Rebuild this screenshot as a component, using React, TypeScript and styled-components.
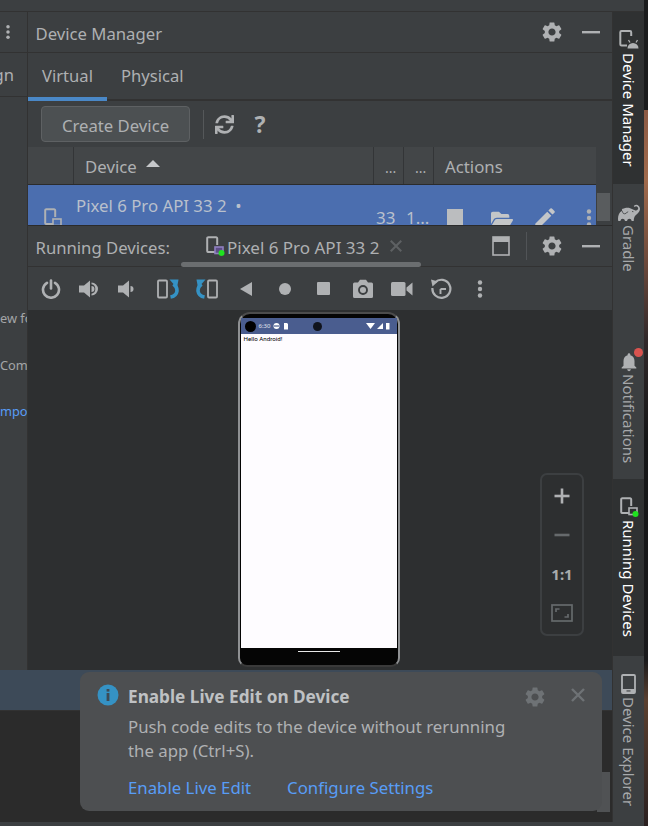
import React from 'react';
import styled, { createGlobalStyle } from 'styled-components';
import { FaFolderOpen, FaSync } from 'react-icons/fa';
import { MdEdit, MdNotifications, MdSettings } from 'react-icons/md';
import { SiGradle } from 'react-icons/si';

const ICON = '#afb1b3';
const TEXT = '#aeb0b2';
const LINE = '#323232';
const BG = '#3c3f41';
const DARK = '#2d2f30';
const LINK = '#589df6';
const COLUMNS = '45px 300px 30px 30px 163px';

const GlobalStyle = createGlobalStyle`
  html, body { margin: 0; padding: 0; background: ${BG}; }
  * { box-sizing: border-box; }
`;

const Page = styled.div`
  width: 648px;
  height: 826px;
  display: flex;
  overflow: hidden;
  position: relative;
  font-family: 'Noto Sans', 'Open Sans', sans-serif;
  color: ${TEXT};
  background: ${BG};
`;

const Window = styled.div`
  width: 644px;
  display: flex;
  flex-direction: column;
`;

const Wallpaper = styled.div`
  width: 4px;
  background: linear-gradient(
    180deg,
    #1b1c1d 0 110px,
    #8c5a44 110px,
    #a06a4c 180px,
    #6d4a3c 260px,
    #30282a 340px,
    #151617 440px,
    #1a1a1c 660px,
    #5a4030 700px,
    #2a2020 826px
  );
`;

const TopStrip = styled.div`
  height: 12px;
  border-bottom: 1px solid ${LINE};
`;

const BottomStrip = styled.div`
  height: 4px;
  background: ${BG};
`;

const Workspace = styled.div`
  flex: 1;
  display: flex;
  min-height: 0;
`;

const Center = styled.div`
  width: 612px;
  display: flex;
  flex-direction: column;
`;

const Upper = styled.div`
  height: 658px;
  display: flex;
`;

const LeftStrip = styled.div`
  width: 28px;
  display: flex;
  flex-direction: column;
  border-right: 1px solid ${LINE};
  overflow: hidden;
`;

const LeftHead = styled.div`
  height: 41px;
  display: flex;
  align-items: center;
  justify-content: flex-end;
  padding-right: 11px;
  border-bottom: 1px solid ${LINE};
`;

const LeftTab = styled.div`
  height: 44px;
  display: flex;
  align-items: center;
  justify-content: flex-end;
  padding-right: 13px;
  font-size: 16.6px;
  white-space: nowrap;
  border-bottom: 1px solid ${LINE};
`;

const LeftLines = styled.div`
  display: flex;
  flex-direction: column;
  gap: 26.5px;
  padding-top: 211px;
`;

const LeftLine = styled.div<{ $link?: boolean }>`
  height: 20px;
  line-height: 20px;
  font-size: 12.8px;
  white-space: nowrap;
  color: ${props => (props.$link ? LINK : '#a4a6a8')};
`;

const Main = styled.div`
  width: 584px;
  display: flex;
  flex-direction: column;
  position: relative;
`;

const PaneHeader = styled.div`
  height: 41px;
  flex: none;
  display: flex;
  align-items: center;
  padding: 2px 2px 0 7.5px;
  border-bottom: 1px solid ${LINE};
  font-size: 16.7px;
`;

const PaneActions = styled.div`
  margin: -2px 0 0 auto;
  display: flex;
  align-items: center;
`;

const ActionSlot = styled.div`
  width: 39px;
  display: flex;
  justify-content: center;
  align-items: center;
`;

const VSep = styled.div`
  width: 1px;
  height: 28px;
  background: #515457;
  margin: 0 5px 0 6px;
`;

const Tabs = styled.div`
  height: 48px;
  flex: none;
  display: flex;
  border-bottom: 2px solid ${LINE};
`;

const Tab = styled.div<{ $active?: boolean }>`
  height: 48px;
  padding: 1px 14px 0;
  display: flex;
  align-items: center;
  font-size: 16.6px;
  border-bottom: 4px solid ${props => (props.$active ? '#4a88c7' : 'transparent')};
  color: ${TEXT};
`;

const Toolbar = styled.div`
  height: 46px;
  flex: none;
  display: flex;
  align-items: center;
  padding-left: 13px;
`;

const CreateButton = styled.button`
  width: 149px;
  height: 36px;
  border: 1px solid #5e6163;
  border-radius: 4px;
  background: #4c5052;
  color: ${TEXT};
  font: inherit;
  font-size: 16.7px;
  padding: 3px 0 0;
`;

const ToolSep = styled.div`
  width: 1px;
  height: 29px;
  background: #55585a;
  margin: 0 2px 0 13px;
`;

const ToolIcon = styled.div`
  width: 36px;
  display: flex;
  justify-content: center;
  align-items: center;
  font-size: 23px;
  font-weight: 700;
  color: ${ICON};
`;

const TableHeader = styled.div`
  width: 568px;
  height: 38px;
  flex: none;
  display: grid;
  grid-template-columns: ${COLUMNS};
  background: #434648;
  border-bottom: 1px solid #2b2b2b;
  font-size: 16.8px;
`;

const HeadCell = styled.div<{ $first?: boolean }>`
  display: flex;
  align-items: center;
  padding: 2px 0 0 11px;
  gap: 9px;
  border-left: ${props => (props.$first ? 'none' : '1px solid #333537')};
`;

const Dots = styled(HeadCell)`
  align-items: flex-end;
  padding-bottom: 7px;
  font-size: 14px;
`;

const SortArrow = styled.span`
  width: 0;
  height: 0;
  margin-top: -7px;
  border-left: 7px solid transparent;
  border-right: 7px solid transparent;
  border-bottom: 7px solid #c6c8ca;
`;

const ScrollRow = styled.div`
  height: 41px;
  flex: none;
  display: flex;
  border-bottom: 1px solid #2b2b2b;
`;

const DeviceRow = styled.div`
  width: 568px;
  height: 40px;
  display: grid;
  grid-template-columns: ${COLUMNS};
  background: #4b6eaf;
  overflow: hidden;
  color: #b9c0cc;
`;

const IconCell = styled.div`
  padding: 23px 0 0 15px;
`;

const NameCell = styled.div`
  padding: 8px 0 0 3px;
  font-size: 16.8px;
  line-height: 26px;
`;

const SubName = styled.div`
  margin-top: 3px;
  font-size: 14px;
  line-height: 18px;
`;

const NumCell = styled.div`
  padding: 20px 0 0 3px;
  font-size: 17px;
  line-height: 26px;
`;

const RowActions = styled.div`
  display: grid;
  grid-template-columns: 44px 49px 38px 32px;
  justify-items: center;
  align-items: start;
  padding-top: 20px;
  color: #c4c6c8;
`;

const StopSquare = styled.div`
  width: 16px;
  height: 24px;
  margin-top: 4px;
  background: #bbbdbf;
`;

const FolderSlot = styled.div`
  margin-top: 3px;
  display: flex;
`;

const RowKebab = styled.div`
  justify-self: end;
  margin: 3px -3px 0 0;
  display: flex;
`;

const Scrollbar = styled.div`
  width: 13px;
  height: 28px;
  margin: 8px 0 0 1px;
  background: #595c5e;
`;

const TabIcon = styled.span`
  display: inline-flex;
  margin: -2px 2px 0 35px;
`;

const TabTitle = styled.span`
  font-size: 17px;
`;

const CloseMark = styled.span`
  display: inline-flex;
  margin: -2px 0 0 10px;
`;

const HScroll = styled.div`
  position: absolute;
  left: 153px;
  top: 250px;
  width: 240px;
  height: 5px;
  border-radius: 3px;
  background: #6b6e70;
`;

const DeviceTools = styled.div`
  height: 43px;
  flex: none;
  display: flex;
  align-items: center;
  padding-left: 3px;
`;

const ToolSlot = styled.div`
  width: 39px;
  height: 24px;
  display: flex;
  justify-content: center;
  align-items: center;
  color: ${ICON};
`;

const Viewer = styled.div`
  flex: 1;
  background: ${DARK};
  display: flex;
  justify-content: center;
  padding: 2px 3px 0 0;
`;

const Phone = styled.div`
  width: 162px;
  height: 355px;
  padding: 2px 1px;
  border: 2px solid #8f9193;
  border-top-color: #4c4c4c;
  border-bottom-color: #3a3a3a;
  border-radius: 12px 12px 9px 9px;
  background: #050505;
  display: flex;
  flex-direction: column;
`;

const StatusBar = styled.div`
  margin-top: 2px;
  height: 16px;
  flex: none;
  display: grid;
  grid-template-columns: 1fr auto 1fr;
  align-items: center;
  padding: 0 7px 0 4px;
  background: #4a5d8f;
  color: #e6e8f0;
`;

const StatusLeft = styled.div`
  display: flex;
  align-items: center;
  gap: 3px;
  font-size: 6px;
`;

const Blob = styled.span`
  width: 11px;
  height: 11px;
  border-radius: 50%;
  background: #000;
`;

const Camera = styled.span`
  width: 9px;
  height: 9px;
  border-radius: 50%;
  background: #10131c;
`;

const StatusRight = styled.div`
  display: flex;
  justify-content: flex-end;
`;

const Screen = styled.div`
  flex: 1;
  background: #fefcff;
  color: #000;
  font-size: 6.2px;
  line-height: 10px;
  padding-left: 3px;
  font-family: 'Roboto', sans-serif;
`;

const NavBar = styled.div`
  height: 15px;
  flex: none;
  display: flex;
  justify-content: center;
  padding-top: 3px;
`;

const HomeLine = styled.div`
  width: 42px;
  height: 1px;
  background: #e8e8e8;
`;

const ZoomPanel = styled.div`
  position: absolute;
  left: 512px;
  top: 461px;
  width: 44px;
  height: 163px;
  border: 2px solid #3c3f41;
  border-radius: 7px;
  display: grid;
  grid-template-rows: repeat(4, 39px);
  align-content: center;
  justify-items: center;
  align-items: center;
  color: ${ICON};
`;

const ZoomText = styled.div`
  font-size: 15px;
  font-weight: 700;
  color: #a9abad;
`;

const RightStrip = styled.div`
  width: 32px;
  display: flex;
  flex-direction: column;
  border-left: 1px solid ${LINE};
`;

const SideTab = styled.div<{ $active?: boolean; $height: number }>`
  height: ${props => props.$height}px;
  flex: none;
  display: flex;
  flex-direction: column;
  align-items: center;
  padding-top: 18px;
  gap: 3px;
  background: ${props => (props.$active ? '#2f3132' : BG)};
  color: ${props => (props.$active ? '#ffffff' : '#a6a8aa')};
`;

const SideLabel = styled.div`
  writing-mode: vertical-rl;
  font-size: 15px;
  line-height: 20px;
  white-space: nowrap;
`;

const SideIcon = styled.div`
  position: relative;
  height: 20px;
  display: flex;
  color: ${ICON};
`;

const RedDot = styled.span`
  position: absolute;
  right: -3px;
  top: -3px;
  width: 9px;
  height: 9px;
  border-radius: 50%;
  background: #d9534f;
`;

const StatusStrip = styled.div`
  height: 41px;
  flex: none;
  background: #3d4a58;
  border-bottom: 1px solid #323232;
`;

const Console = styled.div`
  flex: 1;
  background: #2b2b2b;
  display: flex;
  justify-content: flex-end;
  align-items: flex-end;
  padding: 0 2px 10px 0;
`;

const ConsoleThumb = styled.div`
  width: 13px;
  height: 40px;
  background: #505254;
`;

const Balloon = styled.div`
  position: absolute;
  left: 80px;
  top: 672px;
  width: 522px;
  height: 139px;
  border-radius: 9px;
  background: #4d4f51;
  display: grid;
  grid-template-columns: 31px 1fr auto;
  padding: 12px 16px 0 17px;
  font-size: 16.8px;
`;

const BalloonBody = styled.div`
  padding-top: 1px;
  display: flex;
  flex-direction: column;
`;

const BalloonTitle = styled.div`
  font-weight: 700;
  font-size: 17.2px;
  line-height: 24px;
  color: #bfc1c3;
`;

const BalloonText = styled.div`
  margin-top: 6px;
  line-height: 24px;
  color: #afb1b3;
`;

const BalloonLinks = styled.div`
  margin-top: 12px;
  display: flex;
  gap: 36px;
  line-height: 25px;
  color: ${LINK};
`;

const BalloonActions = styled.div`
  display: flex;
  align-items: flex-start;
  gap: 23px;
  padding-top: 1px;
  color: #6e7275;
`;

const CrossSlot = styled.div`
  display: flex;
  padding-top: 2px;
`;

const Kebab = ({ size = 20, color = ICON }: { size?: number; color?: string }) => (
  <svg width={size} height={size} viewBox='0 0 20 20' fill={color}>
    <circle cx='10' cy='3.5' r='2.2' />
    <circle cx='10' cy='10' r='2.2' />
    <circle cx='10' cy='16.5' r='2.2' />
  </svg>
);

const Minus = () => (
  <svg width='20' height='20' viewBox='0 0 20 20'>
    <rect x='1' y='9' width='18' height='2.4' fill={ICON} />
  </svg>
);

const Gear = ({ color = ICON }: { color?: string }) => <MdSettings size={24} color={color} />;

const Cross = ({ size = 16, color = '#6e7275' }: { size?: number; color?: string }) => (
  <svg width={size} height={size} viewBox='0 0 16 16' stroke={color} strokeWidth='2.4' fill='none'>
    <path d='M2 2 L14 14 M14 2 L2 14' />
  </svg>
);

const DeviceGlyph = ({ badge, dot }: { badge?: string; dot?: boolean }) => (
  <svg width='20' height='20' viewBox='0 0 20 20' fill='none'>
    <path d='M10 16H3.5A1.2 1.2 0 0 1 2.2 15V2.5A1.2 1.2 0 0 1 3.5 1.2H11A1.2 1.2 0 0 1 12.2 2.5V9' stroke={ICON} strokeWidth='2' />
    <rect x='10' y='11' width='8' height='6.5' stroke={badge ?? ICON} strokeWidth='1.6' fill={badge ? '#5d4d86' : 'none'} />
    {dot && <circle cx='16.5' cy='17' r='3' fill='#1fe21f' />}
  </svg>
);

const DroidGlyph = () => (
  <svg width='20' height='20' viewBox='0 0 20 20' fill='none'>
    <path d='M8 15.5H2.5A1.2 1.2 0 0 1 1.3 14.3V2.2A1.2 1.2 0 0 1 2.5 1H11A1.2 1.2 0 0 1 12.2 2.2V6' stroke={ICON} strokeWidth='2' />
    <path d='M8.5 18.5a5.5 5.5 0 0 1 11 0z' fill={ICON} />
    <path d='M11 12.5l-1.5-2.5M17 12.5l1.5-2.5' stroke={ICON} strokeWidth='1.3' />
  </svg>
);

const PhoneGlyph = () => (
  <svg width='16' height='20' viewBox='0 0 16 20' fill='none'>
    <rect x='1' y='1' width='13' height='18' rx='1' stroke={ICON} strokeWidth='1.8' />
    <rect x='1' y='15' width='13' height='4' fill={ICON} />
    <rect x='5.5' y='16.4' width='4' height='1.1' fill='#3c3f41' />
  </svg>
);

const Power = () => (
  <svg width='20' height='20' viewBox='0 0 20 20' fill='none' stroke={ICON} strokeWidth='2.6' strokeLinecap='round'>
    <path d='M6 3.8A8 8 0 1 0 14 3.8' />
    <path d='M10 1.5V9.5' />
  </svg>
);

const Speaker = ({ loud }: { loud?: boolean }) => (
  <svg width='22' height='20' viewBox='0 0 22 20' fill={ICON}>
    <path d='M0 6.5H5L11 1.5V18.5L5 13.5H0Z' />
    {loud ? (
      <path d='M12.5 3.5A6.5 6.5 0 0 1 12.5 16.5V14.7A4.8 4.8 0 0 0 12.5 5.3ZM12.5 7A3 3 0 0 1 12.5 13Z' />
    ) : (
      <path d='M12.5 7A3 3 0 0 1 12.5 13Z' />
    )}
  </svg>
);

const Rotate = ({ flip }: { flip?: boolean }) => (
  <svg width='22' height='20' viewBox='0 0 22 20' fill='none' style={{ transform: flip ? 'scaleX(-1)' : undefined }}>
    <rect x='1' y='1.5' width='9' height='17' rx='1' stroke={ICON} strokeWidth='1.8' />
    <path d='M16.5 5C21.5 9 21.5 16.5 13.5 18' stroke='#3592c4' strokeWidth='3.6' />
    <path d='M12.5 0.5H21.5L20 9Z' fill='#3592c4' />
  </svg>
);

const Back = () => (
  <svg width='14' height='16' viewBox='0 0 14 16' fill={ICON}>
    <path d='M1 8L13 1V15Z' />
  </svg>
);

const Snapshot = () => (
  <svg width='22' height='20' viewBox='0 0 22 20' fill='none'>
    <path d='M6 3.5L8 0.8H14L16 3.5H19.5A1.5 1.5 0 0 1 21 5V17.5A1.5 1.5 0 0 1 19.5 19H2.5A1.5 1.5 0 0 1 1 17.5V5A1.5 1.5 0 0 1 2.5 3.5Z' fill={ICON} />
    <circle cx='11' cy='11' r='4' stroke='#3c3f41' strokeWidth='1.9' />
  </svg>
);

const Recorder = () => (
  <svg width='22' height='18' viewBox='0 0 22 18' fill={ICON}>
    <rect x='0' y='2' width='14.5' height='14' rx='1.5' />
    <path d='M15.5 7.5L21.5 2.5V15.5L15.5 10.5Z' />
  </svg>
);

const Restore = () => (
  <svg width='22' height='22' viewBox='0 0 22 22' fill='none' stroke={ICON}>
    <path d='M5.2 4.2A9 9 0 1 1 2.4 10' strokeWidth='2.2' />
    <path d='M1 1.5L8 3.5L2.5 8.5Z' fill={ICON} stroke='none' />
    <path d='M10.5 11H16M10.5 11V16' strokeWidth='1.9' />
  </svg>
);

const WindowMode = () => (
  <svg width='18' height='20' viewBox='0 0 18 20' fill='none'>
    <rect x='1' y='1' width='16' height='18' stroke={ICON} strokeWidth='1.6' />
    <rect x='1' y='1' width='16' height='5' fill={ICON} />
  </svg>
);

const Plus = () => (
  <svg width='18' height='18' viewBox='0 0 18 18' fill={ICON}>
    <rect x='1.5' y='7.7' width='15' height='2.6' />
    <rect x='7.7' y='1.5' width='2.6' height='15' />
  </svg>
);

const ZoomOut = () => (
  <svg width='18' height='18' viewBox='0 0 18 18' fill='#666a6c'>
    <rect x='1.5' y='7.7' width='15' height='2.6' />
  </svg>
);

const FitFrame = () => (
  <svg width='22' height='18' viewBox='0 0 22 18' fill='none' stroke='#666a6c' strokeWidth='1.7'>
    <rect x='1' y='1' width='20' height='16' />
    <path d='M5 8V5H8.5M17 10V13H13.5' />
  </svg>
);

const InfoBadge = () => (
  <svg width='22' height='22' viewBox='0 0 22 22'>
    <circle cx='11' cy='11' r='10.5' fill='#3592c4' />
    <rect x='9.6' y='9' width='2.8' height='8' fill='#3d4a55' />
    <rect x='9.6' y='5' width='2.8' height='2.6' fill='#3d4a55' />
  </svg>
);

const StatusLeftIcons = () => (
  <svg width='16' height='8' viewBox='0 0 16 8' fill='#fff'>
    <circle cx='3.5' cy='4' r='3' />
    <rect x='1' y='3.4' width='5' height='1.2' fill='#4a5d8f' />
    <path d='M11 1H14L15 2V7.5H11Z' />
  </svg>
);

const StatusIcons = () => (
  <svg width='24' height='8' viewBox='0 0 24 8' fill='#fff'>
    <path d='M0 1H9L4.5 7Z' />
    <path d='M11 7L17 1V7Z' />
    <rect x='20' y='1' width='3.5' height='6.5' />
  </svg>
);

const toolIcons = [
  <Power key='power' />,
  <Speaker key='up' loud />,
  <Speaker key='down' />,
  <Rotate key='left' />,
  <Rotate key='right' flip />,
  <Back key='back' />,
  <svg key='home' width='14' height='14'><circle cx='7' cy='7' r='6' fill={ICON} /></svg>,
  <svg key='stop' width='13' height='13'><rect width='13' height='13' rx='1' fill={ICON} /></svg>,
  <Snapshot key='shot' />,
  <Recorder key='rec' />,
  <Restore key='restore' />,
  <Kebab key='more' />,
];

export default function App() {
  return (
    <>
      <GlobalStyle />
      <Page>
        <Window>
          <TopStrip />
          <Workspace>
            <Center>
              <Upper>
                <LeftStrip>
                  <LeftHead>
                    <Kebab size={18} />
                  </LeftHead>
                  <LeftTab>gn</LeftTab>
                  <LeftLines>
                    <LeftLine>ew fo</LeftLine>
                    <LeftLine>Comp</LeftLine>
                    <LeftLine $link>mpo</LeftLine>
                  </LeftLines>
                </LeftStrip>
                <Main>
                  <PaneHeader>
                    Device Manager
                    <PaneActions>
                      <ActionSlot><Gear /></ActionSlot>
                      <ActionSlot><Minus /></ActionSlot>
                    </PaneActions>
                  </PaneHeader>
                  <Tabs>
                    <Tab $active>Virtual</Tab>
                    <Tab>Physical</Tab>
                  </Tabs>
                  <Toolbar>
                    <CreateButton>Create Device</CreateButton>
                    <ToolSep />
                    <ToolIcon><FaSync size={19} /></ToolIcon>
                    <ToolIcon>?</ToolIcon>
                  </Toolbar>
                  <TableHeader>
                    <HeadCell $first />
                    <HeadCell>Device <SortArrow /></HeadCell>
                    <Dots>...</Dots>
                    <Dots>...</Dots>
                    <HeadCell>Actions</HeadCell>
                  </TableHeader>
                  <ScrollRow>
                    <DeviceRow>
                      <IconCell><DeviceGlyph /></IconCell>
                      <NameCell>
                        Pixel 6 Pro API 33 2 &nbsp;•
                        <SubName>Android 13.0 Google APIs</SubName>
                      </NameCell>
                      <NumCell>33</NumCell>
                      <NumCell>1...</NumCell>
                      <RowActions>
                        <StopSquare />
                        <FolderSlot><FaFolderOpen size={22} /></FolderSlot>
                        <MdEdit size={26} />
                        <RowKebab><Kebab /></RowKebab>
                      </RowActions>
                    </DeviceRow>
                    <Scrollbar />
                  </ScrollRow>
                  <PaneHeader>
                    Running Devices:
                    <TabIcon><DeviceGlyph badge='#8f7fc0' dot /></TabIcon>
                    <TabTitle>Pixel 6 Pro API 33 2</TabTitle>
                    <CloseMark><Cross size={14} color='#5e6163' /></CloseMark>
                    <PaneActions>
                      <ActionSlot><WindowMode /></ActionSlot>
                      <VSep />
                      <ActionSlot><Gear /></ActionSlot>
                      <ActionSlot><Minus /></ActionSlot>
                    </PaneActions>
                  </PaneHeader>
                  <DeviceTools>
                    {toolIcons.map(icon => (
                      <ToolSlot key={icon.key}>{icon}</ToolSlot>
                    ))}
                  </DeviceTools>
                  <Viewer>
                    <Phone>
                      <StatusBar>
                        <StatusLeft>
                          <Blob />
                          6:30
                          <StatusLeftIcons />
                        </StatusLeft>
                        <Camera />
                        <StatusRight><StatusIcons /></StatusRight>
                      </StatusBar>
                      <Screen>Hello Android!</Screen>
                      <NavBar><HomeLine /></NavBar>
                    </Phone>
                  </Viewer>
                  <ZoomPanel>
                    <Plus />
                    <ZoomOut />
                    <ZoomText>1:1</ZoomText>
                    <FitFrame />
                  </ZoomPanel>
                  <HScroll />
                </Main>
              </Upper>
              <StatusStrip />
              <Console><ConsoleThumb /></Console>
            </Center>
            <RightStrip>
              <SideTab $active $height={172}>
                <SideIcon><DroidGlyph /></SideIcon>
                <SideLabel>Device Manager</SideLabel>
              </SideTab>
              <SideTab $height={149}>
                <SideIcon><SiGradle size={22} /></SideIcon>
                <SideLabel>Gradle</SideLabel>
              </SideTab>
              <SideTab $height={146}>
                <SideIcon>
                  <MdNotifications size={22} />
                  <RedDot />
                </SideIcon>
                <SideLabel>Notifications</SideLabel>
              </SideTab>
              <SideTab $active $height={177}>
                <SideIcon><DeviceGlyph dot /></SideIcon>
                <SideLabel>Running Devices</SideLabel>
              </SideTab>
              <SideTab $height={166}>
                <SideIcon><PhoneGlyph /></SideIcon>
                <SideLabel>Device Explorer</SideLabel>
              </SideTab>
            </RightStrip>
          </Workspace>
          <BottomStrip />
        </Window>
        <Wallpaper />
        <Balloon>
          <InfoBadge />
          <BalloonBody>
            <BalloonTitle>Enable Live Edit on Device</BalloonTitle>
            <BalloonText>
              Push code edits to the device without rerunning
              <br />
              the app (Ctrl+S).
            </BalloonText>
            <BalloonLinks>
              <span>Enable Live Edit</span>
              <span>Configure Settings</span>
            </BalloonLinks>
          </BalloonBody>
          <BalloonActions>
            <Gear color='#6e7275' />
            <CrossSlot><Cross /></CrossSlot>
          </BalloonActions>
        </Balloon>
      </Page>
    </>
  );
}
